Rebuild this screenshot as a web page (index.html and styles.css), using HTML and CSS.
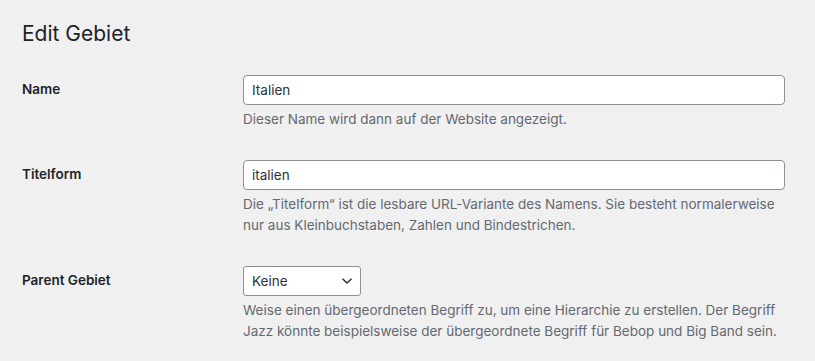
FILE: index.html
```html
<!DOCTYPE html>
<html lang="de">
<head>
    <meta charset="UTF-8">
    <meta name="viewport" content="width=device-width, initial-scale=1.0">
    <title>Edit Gebiet</title>
    <link rel="stylesheet" href="styles.css">
</head>
<body>
    <div class="wrap">
        <h1 class="page-title">Edit Gebiet</h1>

        <table class="form-table">
            <tr class="form-field">
                <th><label for="name">Name</label></th>
                <td>
                    <input type="text" id="name" value="Italien">
                    <p class="description">Dieser Name wird dann auf der Website angezeigt.</p>
                </td>
            </tr>
            <tr class="form-field">
                <th><label for="slug">Titelform</label></th>
                <td>
                    <input type="text" id="slug" value="italien">
                    <p class="description">Die „Titelform“ ist die lesbare URL-Variante des Namens. Sie besteht normalerweise nur aus Kleinbuchstaben, Zahlen und Bindestrichen.</p>
                </td>
            </tr>
            <tr class="form-field">
                <th><label for="parent">Parent Gebiet</label></th>
                <td>
                    <div class="select-box">
                        <select id="parent">
                            <option>Keine</option>
                        </select>
                        <svg class="chevron" width="12" height="8" viewBox="0 0 12 8">
                            <path d="M1.5 1.8 L6 6 L10.5 1.8" fill="none" stroke="#2c3338" stroke-width="1.5"/>
                        </svg>
                    </div>
                    <p class="description">Weise einen übergeordneten Begriff zu, um eine Hierarchie zu erstellen. Der Begriff Jazz könnte beispielsweise der übergeordnete Begriff für Bebop und Big Band sein.</p>
                </td>
            </tr>
        </table>
    </div>
</body>
</html>
```

FILE: styles.css
```css
* {
    box-sizing: border-box;
}

body {
    margin: 0;
    background: #f0f0f1;
    color: #1d2327;
    font-family: Inter, "Noto Sans", sans-serif;
    font-size: 14px;
}

.wrap {
    margin: 10px 20px 0 22px;
}

/* page title */
.page-title {
    margin: 0;
    padding: 9px 0 4px;
    font-size: 21px;
    font-weight: 400;
    line-height: 30px;
}

/* form table */
.form-table {
    width: 100%;
    margin-top: 7px;
    border-collapse: collapse;
}
.form-table th {
    width: 211px;
    padding: 20px 10px 20px 0;
    text-align: left;
    vertical-align: top;
    font-weight: 600;
    font-size: 13.5px;
    line-height: 18px;
}
.form-table td {
    padding: 15px 10px;
    vertical-align: top;
}

input[type="text"] {
    display: block;
    width: 100%;
    height: 30px;
    margin: 0;
    padding: 0 8px;
    border: 1px solid #8c8f94;
    border-radius: 4px;
    background: #fff;
    color: #2c3338;
    font: inherit;
    font-size: 13.5px;
}

.select-box {
    position: relative;
    width: 118px;
}
select {
    display: block;
    width: 100%;
    height: 30px;
    margin: 0;
    padding: 0 24px 0 8px;
    border: 1px solid #8c8f94;
    border-radius: 3px;
    background: #fff;
    color: #2c3338;
    font: inherit;
    font-size: 13.5px;
    appearance: none;
    -webkit-appearance: none;
}
.chevron {
    position: absolute;
    right: 8px;
    top: 11px;
    pointer-events: none;
}

.description {
    margin: 4px 0 0;
    color: #646970;
    font-size: 13.5px;
    line-height: 21px;
}
```
